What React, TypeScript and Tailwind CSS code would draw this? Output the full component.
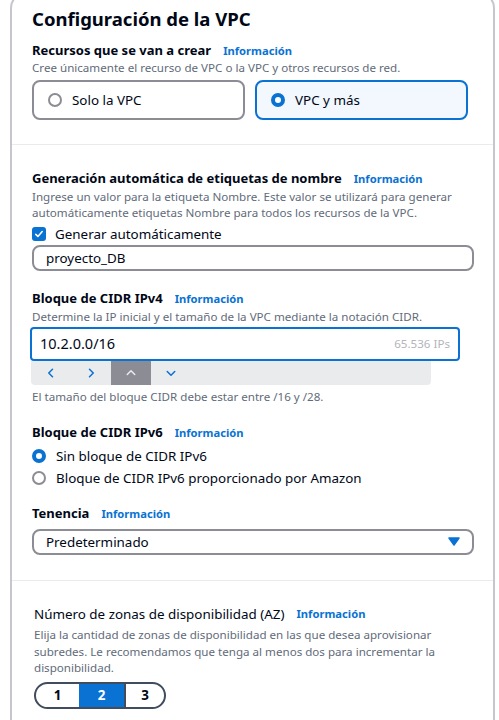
import React from "react";

const font = { fontFamily: '"Noto Sans", "Open Sans", Arial, sans-serif' };

function Info() {
  return <span className="ml-3 text-[11.2px] font-bold text-[#0972d3]">Información</span>;
}

function Radio({ checked }: { checked: boolean }) {
  return checked ? (
    <span className="inline-block h-[14px] w-[14px] rounded-full border-[4px] border-[#0972d3] bg-white shrink-0" />
  ) : (
    <span className="inline-block h-[14px] w-[14px] rounded-full border-2 border-[#8c8c94] bg-white shrink-0" />
  );
}

function Chevron({ d, color }: { d: string; color: string }) {
  return (
    <svg width="12" height="12" viewBox="0 0 16 16" fill="none" stroke={color} strokeWidth="2" strokeLinecap="round" strokeLinejoin="round">
      <path d={d} />
    </svg>
  );
}

export default function App() {
  return (
    <div className="min-h-screen bg-white text-[#000716]" style={font}>
      <div className="ml-[10px] w-[485px] -mt-[8px] rounded-t-[16px] border-x-2 border-t-2 border-[#c6c6cd]">
        <div className="px-[20px] pt-[12px] pb-[24px]">
          <h2 className="text-[18.5px] font-bold leading-[26px]">Configuración de la VPC</h2>
          <div className="mt-[8px] flex items-baseline">
            <span className="text-[13px] font-bold leading-[20px]">Recursos que se van a crear</span>
            <Info />
          </div>
          <p className="text-[11.6px] leading-[16px] text-[#5f6b7a]">
            Cree únicamente el recurso de VPC o la VPC y otros recursos de red.
          </p>
          <div className="mt-[4px] flex gap-[10px]">
            <div className="flex h-[40px] w-[213px] items-center gap-[10px] rounded-[8px] border-2 border-[#8c8c94] px-[14px] text-[13.4px]">
              <Radio checked={false} />
              Solo la VPC
            </div>
            <div className="flex h-[40px] w-[213px] items-center gap-[10px] rounded-[8px] border-2 border-[#0972d3] bg-[#f2f8fd] px-[14px] text-[13.4px]">
              <Radio checked />
              VPC y más
            </div>
          </div>
        </div>
        <div className="h-px bg-[#e9ebed]" />
        <div className="px-[20px] pt-[24px] pb-[25px]">
          <div className="flex h-[20px] items-center">
            <span className="text-[13px] font-bold">Generación automática de etiquetas de nombre</span>
            <Info />
          </div>
          <p className="text-[11.6px] leading-[16px] text-[#5f6b7a]">
            Ingrese un valor para la etiqueta Nombre. Este valor se utilizará para generar automáticamente etiquetas Nombre
            para todos los recursos de la VPC.
          </p>
          <label className="mt-[2px] flex h-[22px] items-center gap-[9px] text-[13.4px]">
            <span className="flex h-[14px] w-[14px] items-center justify-center rounded-[3px] bg-[#0972d3]">
              <svg width="10" height="10" viewBox="0 0 14 14" fill="none" stroke="white" strokeWidth="2.2" strokeLinecap="round" strokeLinejoin="round">
                <path d="M2.5 7.5 5.5 10.5 11.5 3.5" />
              </svg>
            </span>
            Generar automáticamente
          </label>
          <div className="flex h-[26px] w-[442px] items-center rounded-[8px] border-2 border-[#8c8c94] px-[12px] text-[13.4px]">
            proyecto_DB
          </div>

          <div className="mt-[18px] flex h-[20px] items-center">
            <span className="text-[13px] font-bold">Bloque de CIDR IPv4</span>
            <Info />
          </div>
          <p className="text-[11.6px] leading-[16px] text-[#5f6b7a]">
            Determine la IP inicial y el tamaño de la VPC mediante la notación CIDR.
          </p>
          <div className="-ml-[2px] mt-[2px] w-[430px]">
            <div className="flex h-[34px] items-center justify-between rounded-[4px] border-2 border-[#0972d3] px-[8px]">
              <span className="text-[14.5px]">10.2.0.0/16</span>
              <span className="text-[11.6px] text-[#b4b4bb]">65.536 IPs</span>
            </div>
            <div className="ml-px flex h-[24px] w-[400px] rounded-b-[4px] bg-[#e9ebed]">
              <span className="flex w-[40px] items-center justify-center">
                <Chevron d="M10 3 5 8l5 5" color="#0972d3" />
              </span>
              <span className="flex w-[40px] items-center justify-center">
                <Chevron d="M6 3l5 5-5 5" color="#0972d3" />
              </span>
              <span className="flex w-[40px] items-center justify-center bg-[#8c8c94]">
                <Chevron d="M3 10l5-5 5 5" color="#e9ebed" />
              </span>
              <span className="flex w-[40px] items-center justify-center">
                <Chevron d="M3 6l5 5 5-5" color="#0972d3" />
              </span>
            </div>
          </div>
          <p className="mt-[4px] text-[11.6px] leading-[16px] text-[#5f6b7a]">
            El tamaño del bloque CIDR debe estar entre /16 y /28.
          </p>

          <div className="mt-[18px] flex h-[20px] items-center">
            <span className="text-[13px] font-bold">Bloque de CIDR IPv6</span>
            <Info />
          </div>
          <div className="mt-[2px] flex h-[22px] items-center gap-[10px] text-[13.4px]">
            <Radio checked />
            Sin bloque de CIDR IPv6
          </div>
          <div className="flex h-[22px] items-center gap-[10px] text-[13.4px]">
            <Radio checked={false} />
            Bloque de CIDR IPv6 proporcionado por Amazon
          </div>

          <div className="mt-[15px] flex h-[20px] items-center">
            <span className="text-[13px] font-bold">Tenencia</span>
            <Info />
          </div>
          <div className="mt-[5px] flex h-[26px] w-[442px] items-center justify-between rounded-[8px] border-2 border-[#8c8c94] pl-[12px] pr-[12px] text-[13.4px]">
            Predeterminado
            <svg width="12" height="10" viewBox="0 0 12 10">
              <path d="M1 1h10L6 8z" fill="#0972d3" stroke="#0972d3" strokeWidth="1.5" strokeLinejoin="round" />
            </svg>
          </div>
        </div>
        <div className="h-px bg-[#e9ebed]" />
        <div className="px-[22px] pt-[23px] pb-[24px]">
          <div className="flex h-[20px] items-center">
            <span className="text-[13.4px]">Número de zonas de disponibilidad (AZ)</span>
            <Info />
          </div>
          <p className="mt-[3px] text-[11.6px] leading-[16.5px] text-[#5f6b7a]">
            Elija la cantidad de zonas de disponibilidad en las que desea aprovisionar subredes. Le recomendamos que tenga al
            menos dos para incrementar la disponibilidad.
          </p>
          <div className="mt-[5px] flex h-[27px] w-[132px] overflow-hidden rounded-full border-2 border-[#414d5c] text-[13.4px] font-bold">
            <span className="flex w-[43px] items-center justify-center">1</span>
            <span className="flex w-[45px] items-center justify-center bg-[#0972d3] text-white">2</span>
            <span className="flex flex-1 items-center justify-center border-l-2 border-[#414d5c]">3</span>
          </div>
        </div>
      </div>
    </div>
  );
}
